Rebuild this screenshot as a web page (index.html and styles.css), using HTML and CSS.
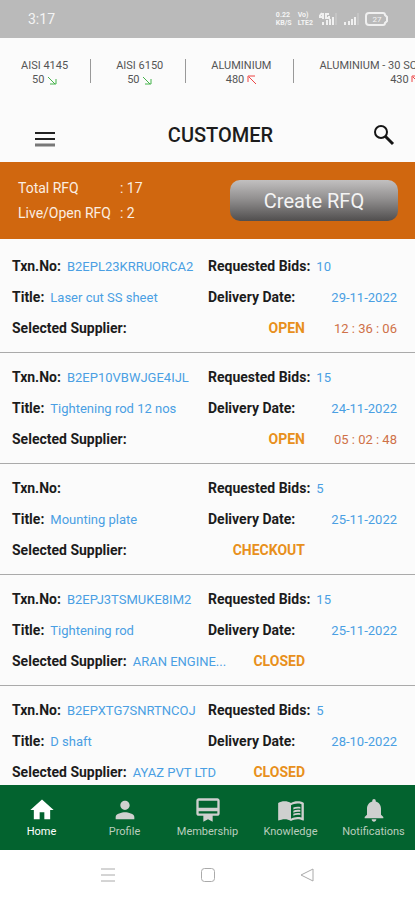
FILE: index.html
```html
<!DOCTYPE html>
<html lang="en">
<head>
<meta charset="utf-8">
<meta name="viewport" content="width=device-width, initial-scale=1">
<title>Customer</title>
<link rel="stylesheet" href="styles.css">
</head>
<body>
<div class="status">
  <span class="clock">3:17</span>
  <span class="tiny">0.22<br>KB/S</span>
  <span class="tiny">Vo)<br>LTE2</span>
  <svg width="18" height="14" viewBox="0 0 18 14" aria-hidden="true"><path d="M3 1 0 5h5M4 1v6M10 2H7v4h3V4M4 10v3M8 8v5M11 7v6M14 5v8"/><path class="dim" d="M17 1v12"/></svg>
  <svg width="16" height="14" viewBox="0 0 16 14" aria-hidden="true"><path d="M2 10v3M6 9v4M9 7v6M12 5v8"/><path class="dim" d="M15 1v12"/></svg>
  <span class="battery"><svg width="24" height="14" viewBox="0 0 24 14" aria-hidden="true"><path d="M4 1h14q2 0 2 2l2 2v4l-2 2q0 2-2 2H4q-3 0-3-3V4q0-3 3-3z"/></svg><span>27</span></span>
</div>

<div class="ticker">
  <div class="quote">AISI 4145<br>50 <svg class="down" width="10" height="10" viewBox="0 0 10 10" aria-hidden="true"><path d="M1 2l7 7M9 4v5H3"/></svg></div>
  <div class="quote">AISI 6150<br>50 <svg class="down" width="10" height="10" viewBox="0 0 10 10" aria-hidden="true"><path d="M1 2l7 7M9 4v5H3"/></svg></div>
  <div class="quote">ALUMINIUM<br>480 <svg class="up" width="10" height="10" viewBox="0 0 10 10" aria-hidden="true"><path d="M9 9L2 2M1 7V1h7"/></svg></div>
  <div class="quote">ALUMINIUM - 30 SCRAP GRADE AB<br>430 <svg class="up" width="10" height="10" viewBox="0 0 10 10" aria-hidden="true"><path d="M9 9L2 2M1 7V1h7"/></svg></div>
</div>

<header class="bar">
  <button class="menu" aria-label="Menu"><svg width="22" height="16" viewBox="0 0 22 16"><path d="M1 2h20M1 8h20" stroke="#222" stroke-width="2"/><path d="M1 14h20" stroke="#777" stroke-width="3"/></svg></button>
  <h1>CUSTOMER</h1>
  <button aria-label="Search"><svg width="22" height="22" viewBox="0 0 22 22" fill="none" stroke="#151515"><circle cx="8" cy="8" r="6" stroke-width="2"/><path d="M12 12l8 8" stroke-width="3"/></svg></button>
</header>

<section class="summary">
  <dl>
    <dt>Total RFQ</dt><dd>: 17</dd>
    <dt>Live/Open RFQ</dt><dd>: 2</dd>
  </dl>
  <button class="create">Create RFQ</button>
</section>

<main class="list">
  <article class="rfq">
    <p><b>Txn.No:</b> <span>B2EPL23KRRUORCA2</span></p><p><b>Requested Bids:</b> <span>10</span></p>
    <p><b>Title:</b> <span>Laser cut SS sheet</span></p><p class="date"><b>Delivery Date:</b> <span>29-11-2022</span></p>
    <div class="foot"><p><b>Selected Supplier:</b></p><strong>OPEN</strong><time>12 : 36 : 06</time></div>
  </article>
  <article class="rfq">
    <p><b>Txn.No:</b> <span>B2EP10VBWJGE4IJL</span></p><p><b>Requested Bids:</b> <span>15</span></p>
    <p><b>Title:</b> <span>Tightening rod 12 nos</span></p><p class="date"><b>Delivery Date:</b> <span>24-11-2022</span></p>
    <div class="foot"><p><b>Selected Supplier:</b></p><strong>OPEN</strong><time>05 : 02 : 48</time></div>
  </article>
  <article class="rfq">
    <p><b>Txn.No:</b></p><p><b>Requested Bids:</b> <span>5</span></p>
    <p><b>Title:</b> <span>Mounting plate</span></p><p class="date"><b>Delivery Date:</b> <span>25-11-2022</span></p>
    <div class="foot"><p><b>Selected Supplier:</b></p><strong>CHECKOUT</strong><time></time></div>
  </article>
  <article class="rfq">
    <p><b>Txn.No:</b> <span>B2EPJ3TSMUKE8IM2</span></p><p><b>Requested Bids:</b> <span>15</span></p>
    <p><b>Title:</b> <span>Tightening rod</span></p><p class="date"><b>Delivery Date:</b> <span>25-11-2022</span></p>
    <div class="foot"><p><b>Selected Supplier:</b> <span>ARAN ENGINE...</span></p><strong>CLOSED</strong><time></time></div>
  </article>
  <article class="rfq">
    <p><b>Txn.No:</b> <span>B2EPXTG7SNRTNCOJ</span></p><p><b>Requested Bids:</b> <span>5</span></p>
    <p><b>Title:</b> <span>D shaft</span></p><p class="date"><b>Delivery Date:</b> <span>28-10-2022</span></p>
    <div class="foot"><p><b>Selected Supplier:</b> <span>AYAZ PVT LTD</span></p><strong>CLOSED</strong><time></time></div>
  </article>
</main>

<nav class="tabs">
  <a href="#home" class="active"><svg width="28" height="28" viewBox="0 0 24 24" aria-hidden="true"><path d="M10 20v-6h4v6h5v-8h3L12 3 2 12h3v8z"/></svg>Home</a>
  <a href="#profile"><svg width="28" height="28" viewBox="0 0 24 24" aria-hidden="true"><path d="M12 12c2.200 0 4-1.800 4-4s-1.800-4-4-4-4 1.800-4 4 1.800 4 4 4zm0 2c-2.700 0-8 1.300-8 4v2h16v-2c0-2.700-5.300-4-8-4z"/></svg>Profile</a>
  <a href="#membership"><svg width="28" height="28" viewBox="0 0 24 24" aria-hidden="true"><path d="M20 2H4c-1.100 0-2 .9-2 2v11c0 1.100.9 2 2 2h4v5l4-2 4 2v-5h4c1.100 0 2-.9 2-2V4c0-1.100-.9-2-2-2zm0 13H4v-2h16v2zm0-5H4V4h16v6z"/></svg>Membership</a>
  <a href="#knowledge"><svg width="28" height="28" viewBox="0 0 24 24" aria-hidden="true"><path fill-rule="evenodd" d="M21 5c-1.100-.4-2.300-.5-3.500-.5-2 0-4 .4-5.500 1.500-1.500-1.100-3.500-1.500-5.500-1.500S2.500 4.900 1 6v14.600c0 .3.300.5.500.5 1.300-.6 3.300-1.100 5-1.100 2 0 4 .4 5.500 1.500 1.400-.9 3.800-1.500 5.500-1.500 1.600 0 3.300.3 4.700 1.100.4.100.8-.2.800-.5V6c-.6-.4-1.200-.8-2-1zm0 13.500c-1.100-.4-2.300-.5-3.500-.5-1.700 0-4.100.7-5.500 1.500V8c1.400-.9 3.800-1.500 5.500-1.500 1.200 0 2.400.1 3.500.5zM14 9.900c1.800-.8 4-.9 6-.5V11c-2-.4-4.300-.2-6 .6zm0 2.700c1.800-.8 4-.9 6-.5v1.500c-2-.4-4.300-.2-6 .7zm0 2.600c1.800-.8 4-.9 6-.5v1.600c-2-.4-4.300-.2-6 .6z"/></svg>Knowledge</a>
  <a href="#notifications"><svg width="28" height="28" viewBox="0 0 24 24" aria-hidden="true"><path d="M12 22c1.100 0 2-.9 2-2h-4c0 1.100.9 2 2 2zm6-6v-5c0-3.100-1.600-5.600-4.500-6.300V4a1.500 1.500 0 0 0-3 0v.7C7.600 5.400 6 7.900 6 11v5l-2 2v1h16v-1z"/></svg>Notifications</a>
</nav>

<div class="system">
  <button aria-label="Recent apps"><svg width="16" height="16" viewBox="0 0 16 16"><path d="M1 2h14M1 8h14M1 14h14"/></svg></button>
  <button aria-label="Home screen"><svg width="16" height="16" viewBox="0 0 16 16"><rect x="1.500" y="1.500" width="13" height="13" rx="3"/></svg></button>
  <button aria-label="Back"><svg width="16" height="16" viewBox="0 0 16 16"><path d="M14 2v12L2 8z"/></svg></button>
</div>
</body>
</html>
```
FILE: styles.css
```css
* { box-sizing: border-box; }
body {
  margin: 0;
  height: 100vh;
  display: flex;
  flex-direction: column;
  overflow: hidden;
  background: #fbfbfb;
  color: #1c1c1c;
  font-family: Roboto, sans-serif;
}
button { border: 0; padding: 0; background: none; font: inherit; display: flex; justify-content: center; align-items: center; }
p, h1, dl, dd { margin: 0; }

.status {
  flex: none;
  height: 38px;
  padding: 0 26px 0 28px;
  display: flex;
  align-items: center;
  gap: 6px;
  background: #bababa;
  color: #f4f4f4;
}
.clock { font-size: 14px; margin-right: auto; }
.tiny { font-size: 7px; line-height: 8px; font-weight: 700; }
.status svg { fill: none; stroke: #f0f0f0; stroke-width: 2; }
.status .dim { stroke: #d0d0d0; stroke-width: 1; }
.battery { display: grid; place-items: center; font-size: 8px; }
.battery > * { grid-area: 1 / 1; }

.ticker {
  flex: none;
  height: 70px;
  padding: 21px 0 0 21px;
  display: flex;
  overflow: hidden;
  white-space: nowrap;
}
.quote {
  flex: none;
  height: 24px;
  font-size: 11px;
  line-height: 14px;
  text-align: center;
  color: #555;
}
.quote + .quote { margin-left: 22px; padding-left: 25px; border-left: 1px solid #999; }
.quote svg { vertical-align: -2px; fill: none; stroke-width: 1; }
.down { stroke: #45b34a; }
.up { stroke: #ee4444; }

.bar {
  flex: none;
  height: 54px;
  padding: 0 20px 0 34px;
  display: flex;
  align-items: center;
  justify-content: space-between;
}
.bar h1 { font-size: 20px; line-height: 24px; font-weight: 500; }
.menu { width: 34px; padding-top: 8px; justify-content: flex-start; }

.summary {
  flex: none;
  height: 77px;
  padding: 0 17px 0 18px;
  display: flex;
  align-items: center;
  justify-content: space-between;
  background: #d0670f;
  color: #fbeee2;
}
.summary dl { display: grid; grid-template-columns: auto auto; column-gap: 9px; font-size: 14px; line-height: 25px; }
.create {
  width: 168px;
  height: 41px;
  border-radius: 10px;
  background: linear-gradient(#c2c0c0, #8d8b8b 50%, #504e4e);
  color: #f4f4f4;
  font-size: 20px;
}

.list { flex: 1; min-height: 0; overflow: hidden; padding-top: 3px; }
.rfq {
  display: grid;
  grid-template-columns: 196px 1fr;
  padding: 9px 18px 8px 12px;
  border-bottom: 1px solid #aaa;
  font-size: 14px;
  line-height: 31px;
  white-space: nowrap;
}
.rfq p { display: flex; gap: 6px; }
.rfq b, .rfq strong { font-weight: 700; }
.rfq p span { color: #4a9fe3; font-size: 13px; }
.rfq .date { justify-content: space-between; }
.foot { grid-column: 1 / -1; display: flex; }
.foot p { flex: 1; }
.foot strong { color: #e8901c; }
.foot time { width: 92px; text-align: right; color: #cf7148; font-size: 13px; }

.tabs {
  flex: none;
  height: 65px;
  padding-top: 11px;
  display: grid;
  grid-template-columns: repeat(5, 1fr);
  background: #03632f;
}
.tabs a {
  display: flex;
  flex-direction: column;
  align-items: center;
  color: #b9cdbd;
  font-size: 11px;
  line-height: 15px;
  text-decoration: none;
}
.tabs svg { fill: #cfd0cf; }
.tabs .active { color: #fff; }
.tabs .active svg { fill: #fff; }

.system {
  flex: none;
  height: 50px;
  padding: 0 100px;
  display: flex;
  align-items: center;
  justify-content: space-between;
  background: #fff;
}
.system svg { fill: none; stroke: #aaa; stroke-width: 1; }
```
